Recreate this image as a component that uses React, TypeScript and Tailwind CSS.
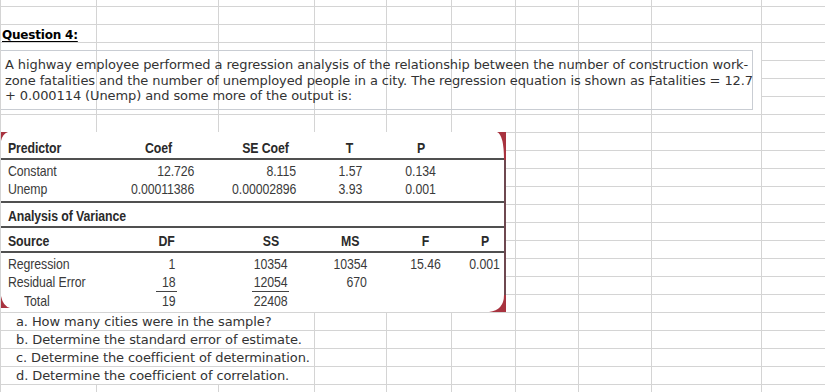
import React from 'react';

// ────────────────────────────────────────────────────────────────
// Sheet grid: column widths A..J (right border is the last px)
// ────────────────────────────────────────────────────────────────
const COL_W = [
  'w-[96px]',
  'w-[122px]',
  'w-[96px]',
  'w-[72px]',
  'w-[65px]',
  'w-[64px]',
  'w-[63px]',
  'w-[73px]',
  'w-[110px]',
  'w-[100px]',
];

function SheetRow({
  h = 'h-[18px]',
  noRight = [],
  noBottom = [],
  children,
}: {
  h?: string;
  noRight?: number[];
  noBottom?: number[];
  children?: React.ReactNode;
}) {
  return (
    <div className={`flex ${h}`}>
      {COL_W.map((w, i) => (
        <div
          key={i}
          className={`${w} shrink-0 border-[#d4d4d4] whitespace-nowrap ${noRight.includes(i) ? '' : 'border-r'} ${
            noBottom.includes(i) ? '' : 'border-b'
          }`}
        >
          {i === 0 ? children : null}
        </div>
      ))}
    </div>
  );
}

const UNDER_BOX = [0, 1, 2, 3, 4, 5, 6, 7, 8];

// ────────────────────────────────────────────────────────────────
// Pasted textbook picture (regression output)
// condensed type: Liberation Sans squeezed horizontally
// ────────────────────────────────────────────────────────────────
const JUSTIFY = { l: 'justify-start', r: 'justify-end', c: 'justify-center' };
const ORIGIN = { l: 'origin-left', r: 'origin-right', c: 'origin-center' };

function Cell({
  w,
  a = 'l',
  className = '',
  children,
}: {
  w: string;
  a?: 'l' | 'r' | 'c';
  className?: string;
  children?: React.ReactNode;
}) {
  return (
    <div className={`flex shrink-0 whitespace-nowrap ${w} ${JUSTIFY[a]} ${className}`}>
      <span className={`inline-block scale-x-[0.82] ${ORIGIN[a]}`}>{children}</span>
    </div>
  );
}

function Rule() {
  return <div className="h-[2px] w-full bg-[#505050]" />;
}

function RegressionPicture() {
  return (
    <div className="absolute left-0 top-[132px] h-[180px] w-[505px] border-r-2 border-[#6e4850] bg-white font-['Liberation_Sans',sans-serif] text-[15px] text-[#3a3a3a]">
      {/* coefficient table */}
      <div className="flex h-[26px] pt-[8px] leading-[16px] font-bold text-[#2a2a2a]">
        <Cell w="w-[120px]" className="pl-[7px]">Predictor</Cell>
        <Cell w="w-[75px]" a="r" className="pr-[24px]">Coef</Cell>
        <Cell w="w-[102px]" a="r" className="pr-[9px]">SE Coef</Cell>
        <Cell w="w-[104px]" a="c">T</Cell>
        <Cell w="w-[38px]" a="c">P</Cell>
      </div>
      <Rule />
      <div className="h-[41px] pt-[2px] leading-[17.5px]">
        <div className="flex">
          <Cell w="w-[120px]" className="pl-[7px]">Constant</Cell>
          <Cell w="w-[75px]" a="r" className="pr-[2px]">12.726</Cell>
          <Cell w="w-[102px]" a="r" className="pr-[2px]">8.115</Cell>
          <Cell w="w-[104px]" a="c">1.57</Cell>
          <Cell w="w-[38px]" a="c">0.134</Cell>
        </div>
        <div className="flex">
          <Cell w="w-[120px]" className="pl-[7px]">Unemp</Cell>
          <Cell w="w-[75px]" a="r" className="pr-[2px]">0.00011386</Cell>
          <Cell w="w-[102px]" a="r" className="pr-[2px]">0.00002896</Cell>
          <Cell w="w-[104px]" a="c">3.93</Cell>
          <Cell w="w-[38px]" a="c">0.001</Cell>
        </div>
      </div>
      <Rule />
      <div className="flex h-[23px] pt-[5px] leading-[16px] font-bold text-[#2a2a2a]">
        <Cell w="w-[200px]" className="pl-[7px]">Analysis of Variance</Cell>
      </div>
      <Rule />

      {/* analysis of variance */}
      <div className="flex h-[23px] pt-[5px] leading-[16px] font-bold text-[#2a2a2a]">
        <Cell w="w-[155px]" className="pl-[7px]">Source</Cell>
        <Cell w="w-[21px]" a="r" className="pr-[2px]">DF</Cell>
        <Cell w="w-[37px]" a="c" className="ml-[75px]">SS</Cell>
        <Cell w="w-[36px]" a="c" className="ml-[43px]">MS</Cell>
        <Cell w="w-[39px]" a="c" className="ml-[38px]">F</Cell>
        <Cell w="w-[36px]" a="c" className="ml-[22px]">P</Cell>
      </div>
      <Rule />
      <div className="pt-[2px] leading-[18px]">
        <div className="flex h-[18px]">
          <Cell w="w-[155px]" className="pl-[7px]">Regression</Cell>
          <Cell w="w-[21px]" a="r" className="pr-[2px]">1</Cell>
          <Cell w="w-[37px]" a="c" className="ml-[75px]">10354</Cell>
          <Cell w="w-[36px]" a="r" className="ml-[43px] pr-[1px]">10354</Cell>
          <Cell w="w-[39px]" a="c" className="ml-[38px]">15.46</Cell>
          <Cell w="w-[36px]" a="c" className="ml-[22px]">0.001</Cell>
        </div>
        <div className="flex h-[19px]">
          <Cell w="w-[155px]" className="pl-[7px]">Residual Error</Cell>
          <Cell w="w-[21px]" a="r" className="h-[19px] border-b border-[#444] pr-[2px]">18</Cell>
          <Cell w="w-[37px]" a="c" className="ml-[75px] h-[19px] border-b border-[#444]">12054</Cell>
          <Cell w="w-[36px]" a="r" className="ml-[43px] pr-[1px]">670</Cell>
        </div>
        <div className="flex h-[18px]">
          <Cell w="w-[155px]" className="pl-[23px]">Total</Cell>
          <Cell w="w-[21px]" a="r" className="pr-[2px]">19</Cell>
          <Cell w="w-[37px]" a="c" className="ml-[75px]">22408</Cell>
        </div>
      </div>

      {/* red rounded corners of the cropped textbook box */}
      <svg className="absolute left-0 top-0" width="7" height="9" viewBox="0 0 7 9">
        <path d="M0 0H7Q1.5 2 0 9Z" fill="#a8333f" />
      </svg>
      <svg className="absolute right-[-2px] top-0" width="10" height="28" viewBox="0 0 10 28">
        <path d="M1 0H10V28H8Q8 3 1 0Z" fill="#a8333f" />
      </svg>
      <svg className="absolute bottom-0 right-[-2px]" width="17" height="17" viewBox="0 0 17 17">
        <path d="M17 0V17H0Q15 15 15 0Z" fill="#a8333f" />
      </svg>
      <svg className="absolute bottom-[4px] left-0" width="9" height="12" viewBox="0 0 9 12">
        <path d="M0 0Q2 10 9 12H0Z" fill="#a8333f" />
      </svg>
    </div>
  );
}

// ────────────────────────────────────────────────────────────────
// Page
// ────────────────────────────────────────────────────────────────
export default function App() {
  const questions = [
    'a. How many cities were in the sample?',
    'b. Determine the standard error of estimate.',
    'c. Determine the coefficient of determination.',
    'd. Determine the coefficient of correlation.',
  ];

  return (
    <div className="relative h-[392px] w-[825px] overflow-hidden border-l border-[#d4d4d4] bg-white font-['DejaVu_Sans',sans-serif] text-[13px] tracking-[-0.1px] text-[#333]">
      <SheetRow h="h-[7px]" />
      <SheetRow />
      <SheetRow>
        <span className="pl-[1px] text-[12px] font-bold leading-[17px] tracking-[-0.2px] text-black underline underline-offset-2">
          Question 4:
        </span>
      </SheetRow>
      <SheetRow noBottom={UNDER_BOX} />
      <SheetRow noBottom={UNDER_BOX} />
      <SheetRow noBottom={UNDER_BOX} />
      <SheetRow />
      <SheetRow />
      {Array.from({ length: 10 }).map((_, i) => (
        <SheetRow key={i} />
      ))}
      {questions.map((q) => (
        <SheetRow key={q} noRight={[0, 1]}>
          <span className="block pl-[15px] leading-[18px]">{q}</span>
        </SheetRow>
      ))}
      <SheetRow />

      {/* text box with the question stem */}
      <div className="absolute left-[-1px] top-[50px] h-[60px] w-[753px] border border-[#c9cdd3] pl-[4px] pt-[6px] leading-[15.6px]">
        <div className="whitespace-nowrap">
          A highway employee performed a regression analysis of the relationship between the number of construction work-
        </div>
        <div className="whitespace-nowrap">
          zone fatalities and the number of unemployed people in a city. The regression equation is shown as Fatalities = 12.7
        </div>
        <div className="whitespace-nowrap">+ 0.000114 (Unemp) and some more of the output is:</div>
      </div>

      <RegressionPicture />
    </div>
  );
}
